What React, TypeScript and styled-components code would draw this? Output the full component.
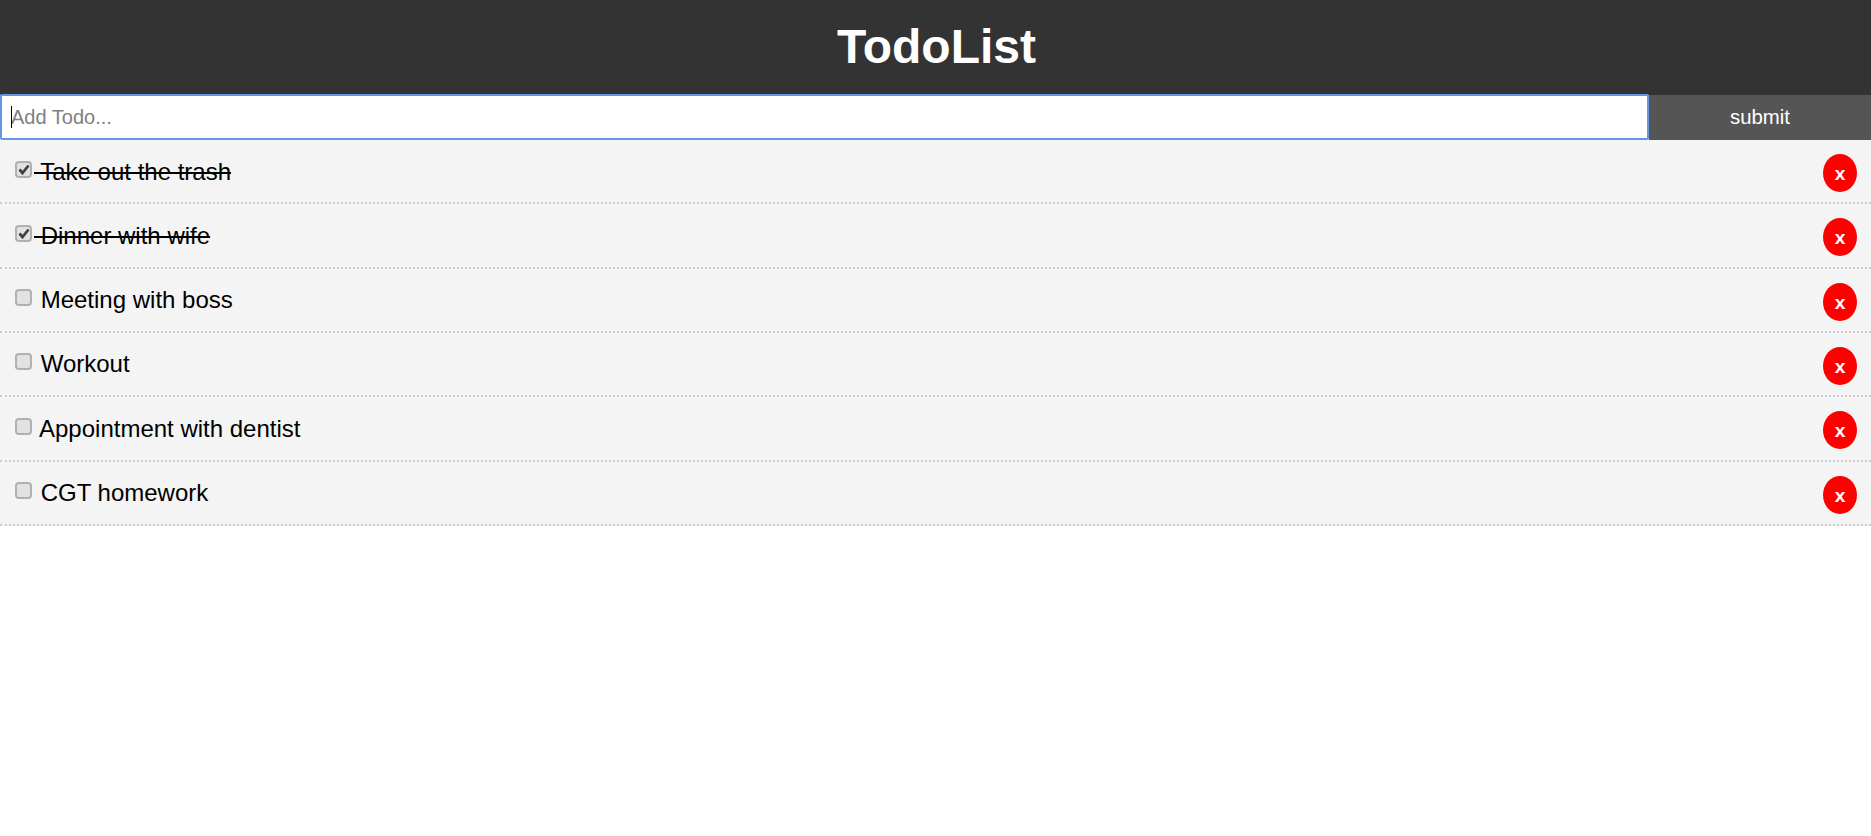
import React from "react";
import styled, { createGlobalStyle } from "styled-components";

const Global = createGlobalStyle`
  html, body { margin: 0; padding: 0; background: #fff; }
  body { font-family: "Liberation Sans", Arial, sans-serif; }
  * { box-sizing: border-box; }
`;

const Header = styled.header`
  height: 95px;
  background: #333;
  color: #fff;
  display: flex;
  align-items: center;
  justify-content: center;
  padding: 0 0 2px 2px;
`;
const Title = styled.h1`
  margin: 0;
  font-size: 48px;
  font-weight: 700;
  line-height: 1;
`;
const Form = styled.form`
  display: flex;
  height: 45px;
`;
const InputWrap = styled.div`
  position: relative;
  flex: 1 1 auto;
  display: flex;
  margin-top: -1px;
`;
const Input = styled.input`
  flex: 1;
  min-width: 0;
  border: 2px solid #6496e8;
  border-radius: 2px;
  outline: none;
  padding: 0 9px;
  font: 20px "Liberation Sans", Arial, sans-serif;
  background: #fff;
  caret-color: transparent;
  &::placeholder { color: #808080; opacity: 1; }
`;
const Caret = styled.span`
  position: absolute;
  left: 11px;
  top: 12px;
  width: 1px;
  height: 22px;
  background: #000;
`;
const Submit = styled.button`
  flex: 0 0 222px;
  border: 0;
  background: #555;
  color: #fff;
  font: 20.4px "Liberation Sans", Arial, sans-serif;
  padding: 0;
`;
const List = styled.ul`
  list-style: none;
  margin: 0;
  padding: 0;
`;
const Row = styled.li`
  height: 64.33px;
  background: #f4f4f4;
  border-bottom: 2px dotted #ccc;
  padding: 0 14px 0 15px;
  display: flex;
  align-items: flex-start;
`;
const Box = styled.span`
  flex: 0 0 17px;
  width: 17px;
  height: 17px;
  margin-top: 20.5px;
  border: 2px solid #b0b0b0;
  border-radius: 4px;
  background: #e2e2e2;
  display: flex;
  align-items: center;
  justify-content: center;
`;
const Label = styled.span<{ $done: boolean; $tight: boolean }>`
  margin-top: 15.5px;
  font-size: 24px;
  line-height: 32px;
  color: #000;
  white-space: pre;
  margin-left: ${(p) => (p.$tight ? "7px" : "2px")};
  text-decoration: ${(p) => (p.$done ? "line-through" : "none")};
  text-decoration-thickness: 2px;
`;
const Delete = styled.button`
  margin-left: auto;
  margin-top: 14px;
  width: 34px;
  height: 38px;
  border: 0;
  padding: 2px 0 0;
  border-radius: 50%;
  background: #f00;
  color: #fff;
  font: 700 19.2px "Liberation Sans", Arial, sans-serif;
`;

const todos = [
  { title: "Take out the trash", done: true },
  { title: "Dinner with wife", done: true },
  { title: "Meeting with boss", done: false },
  { title: "Workout", done: false },
  { title: "Appointment with dentist", done: false, tight: true },
  { title: "CGT homework", done: false },
];

export default function App() {
  return (
    <>
      <Global />
      <Header>
        <Title>TodoList</Title>
      </Header>
      <Form onSubmit={(e) => e.preventDefault()}>
        <InputWrap>
          <Input type="text" placeholder="Add Todo..." />
          <Caret />
        </InputWrap>
        <Submit type="submit">submit</Submit>
      </Form>
      <List>
        {todos.map((t) => (
          <Row key={t.title}>
            <Box>
              {t.done && (
                <svg width="12" height="11" viewBox="0 0 12 11">
                  <path d="M1.5 5.5 L4.5 9 L10.5 1.5" fill="none" stroke="#404040" strokeWidth="2.8" />
                </svg>
              )}
            </Box>
            <Label $done={t.done} $tight={!!t.tight}>{t.tight ? t.title : " " + t.title}</Label>
            <Delete type="button">x</Delete>
          </Row>
        ))}
      </List>
    </>
  );
}
